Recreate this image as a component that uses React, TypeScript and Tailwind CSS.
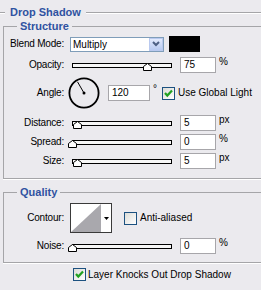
import React from "react";

function Slider({ value }: { value: number }) {
  return (
    <div className="relative w-[100px] h-[9px] self-start mt-[4px]">
      <div className="h-[5px] border border-black bg-[#f6f6f6]" />
      <svg
        className="absolute top-0"
        style={{ left: value - 4 }}
        width="9"
        height="8"
        viewBox="0 0 9 8"
      >
        <path d="M0.5 7.5 V3.5 L4.5 0.5 L8.5 3.5 V7.5 Z" fill="#fff" stroke="#000" />
      </svg>
    </div>
  );
}

function Field({ value, w = "w-[36px]" }: { value: string; w?: string }) {
  return (
    <div
      className={`${w} h-[16px] bg-white border border-[#a7a6aa] flex items-center pl-[3px] text-[10px]`}
    >
      {value}
    </div>
  );
}

function Check({ checked }: { checked: boolean }) {
  return (
    <div className="w-[13px] h-[13px] border border-[#1c5180] bg-gradient-to-br from-[#dcdcd7] to-white flex items-center justify-center">
      {checked && (
        <svg width="11" height="11" viewBox="0 0 11 11">
          <path d="M2 5 L4.3 7.6 L9 2.4" fill="none" stroke="#21a121" strokeWidth="2.2" />
        </svg>
      )}
    </div>
  );
}

function Label({ children }: { children: React.ReactNode }) {
  return <div className="w-[60px] text-right shrink-0 tracking-[-0.2px]">{children}</div>;
}

function SliderRow({
  label,
  value,
  field,
  unit,
  className,
}: {
  label: string;
  value: number;
  field: string;
  unit: string;
  className: string;
}) {
  return (
    <div className={`flex items-center h-[16px] ${className}`}>
      <Label>{label}</Label>
      <div className="ml-[8px] flex">
        <Slider value={value} />
      </div>
      <div className="ml-[8px]">
        <Field value={field} />
      </div>
      <span className="ml-[3px] self-start -mt-[1px]">{unit}</span>
    </div>
  );
}

export default function App() {
  return (
    <div className="w-[261px] h-[290px] overflow-hidden bg-[#ebeaee] text-black text-[10px] leading-[12px] [font-family:'Liberation_Sans',Arial,sans-serif]">
      {/* title */}
      <div className="mt-[6px] h-[13px] flex items-center">
        <div className="w-[5px] border-t border-t-[#a5a5a8] border-b border-b-white" />
        <div className="ml-[5px] font-bold text-[11px] leading-[13px] text-[#2f52a1]">
          Drop Shadow
        </div>
        <div className="ml-[5px] flex-1 border-t border-t-[#a5a5a8] border-b border-b-white" />
      </div>

      {/* Structure */}
      <fieldset className="mt-[1px] ml-[3px] w-[280px] border border-[#a5a5a8] pb-[9px] shadow-[0_1px_0_#fff]">
        <legend className="ml-[13px] px-[3px] font-bold text-[11px] leading-[13px] text-[#2f52a1]">
          Structure
        </legend>

        <div className="mt-[3px] flex items-center h-[16px]">
          <Label>Blend Mode:</Label>
          <div className="ml-[6px] w-[94px] h-[15px] border border-[#7f9db9] bg-white flex">
            <span className="flex-1 pl-[2px] leading-[13px]">Multiply</span>
            <div className="w-[14px] h-full border border-[#b9c9ef] bg-gradient-to-b from-[#e3ebfd] to-[#b8cbf2] flex items-center justify-center">
              <svg width="8" height="6" viewBox="0 0 8 6">
                <path d="M1 1 L4 4 L7 1" fill="none" stroke="#4d6185" strokeWidth="2" />
              </svg>
            </div>
          </div>
          <div className="ml-[5px] w-[31px] h-[16px] bg-black" />
        </div>

        <SliderRow label="Opacity:" value={75} field="75" unit="%" className="mt-[5px]" />

        <div className="mt-[4px] flex items-center h-[32px]">
          <Label>Angle:</Label>
          <svg className="ml-[4px]" width="32" height="32" viewBox="0 0 32 32">
            <circle cx="16" cy="16" r="14.6" fill="none" stroke="#000" strokeWidth="1.8" />
            <path d="M16 16 L9.5 4.8" stroke="#000" strokeWidth="1" />
            <circle cx="16" cy="16" r="1.5" fill="#000" />
          </svg>
          <div className="ml-[8px]">
            <Field value="120" w="w-[42px]" />
          </div>
          <span className="w-[12px] pl-[3px] self-start mt-[6px]">°</span>
          <Check checked />
          <span className="ml-[3px]">Use Global Light</span>
        </div>

        <SliderRow label="Distance:" value={5} field="5" unit="px" className="mt-[6px]" />
        <SliderRow label="Spread:" value={0} field="0" unit="%" className="mt-[3px]" />
        <SliderRow label="Size:" value={5} field="5" unit="px" className="mt-[3px]" />
      </fieldset>

      {/* Quality */}
      <fieldset className="mt-[7px] ml-[3px] w-[280px] border border-[#a5a5a8] pb-[8px] shadow-[0_1px_0_#fff]">
        <legend className="ml-[13px] px-[3px] font-bold text-[11px] leading-[13px] text-[#2f52a1]">
          Quality
        </legend>

        <div className="mt-[4px] flex items-center h-[30px]">
          <Label>Contour:</Label>
          <div className="ml-[6px] w-[42px] h-[30px] border border-[#3a3a3a] bg-white flex">
            <svg width="30" height="28" viewBox="0 0 30 28">
              <polygon points="0,28 30,0 30,28" fill="#a9a8ad" />
            </svg>
            <div className="flex-1 flex items-center justify-center">
              <svg width="5" height="3" viewBox="0 0 5 3">
                <polygon points="0,0 5,0 2.5,3" fill="#000" />
              </svg>
            </div>
          </div>
          <div className="ml-[12px]">
            <Check checked={false} />
          </div>
          <span className="ml-[3px]">Anti-aliased</span>
        </div>

        <SliderRow label="Noise:" value={0} field="0" unit="%" className="mt-[5px]" />
      </fieldset>

      <div className="mt-[5px] pl-[73px] flex items-center h-[13px]">
        <Check checked />
        <span className="ml-[2px]">Layer Knocks Out Drop Shadow</span>
      </div>
    </div>
  );
}
